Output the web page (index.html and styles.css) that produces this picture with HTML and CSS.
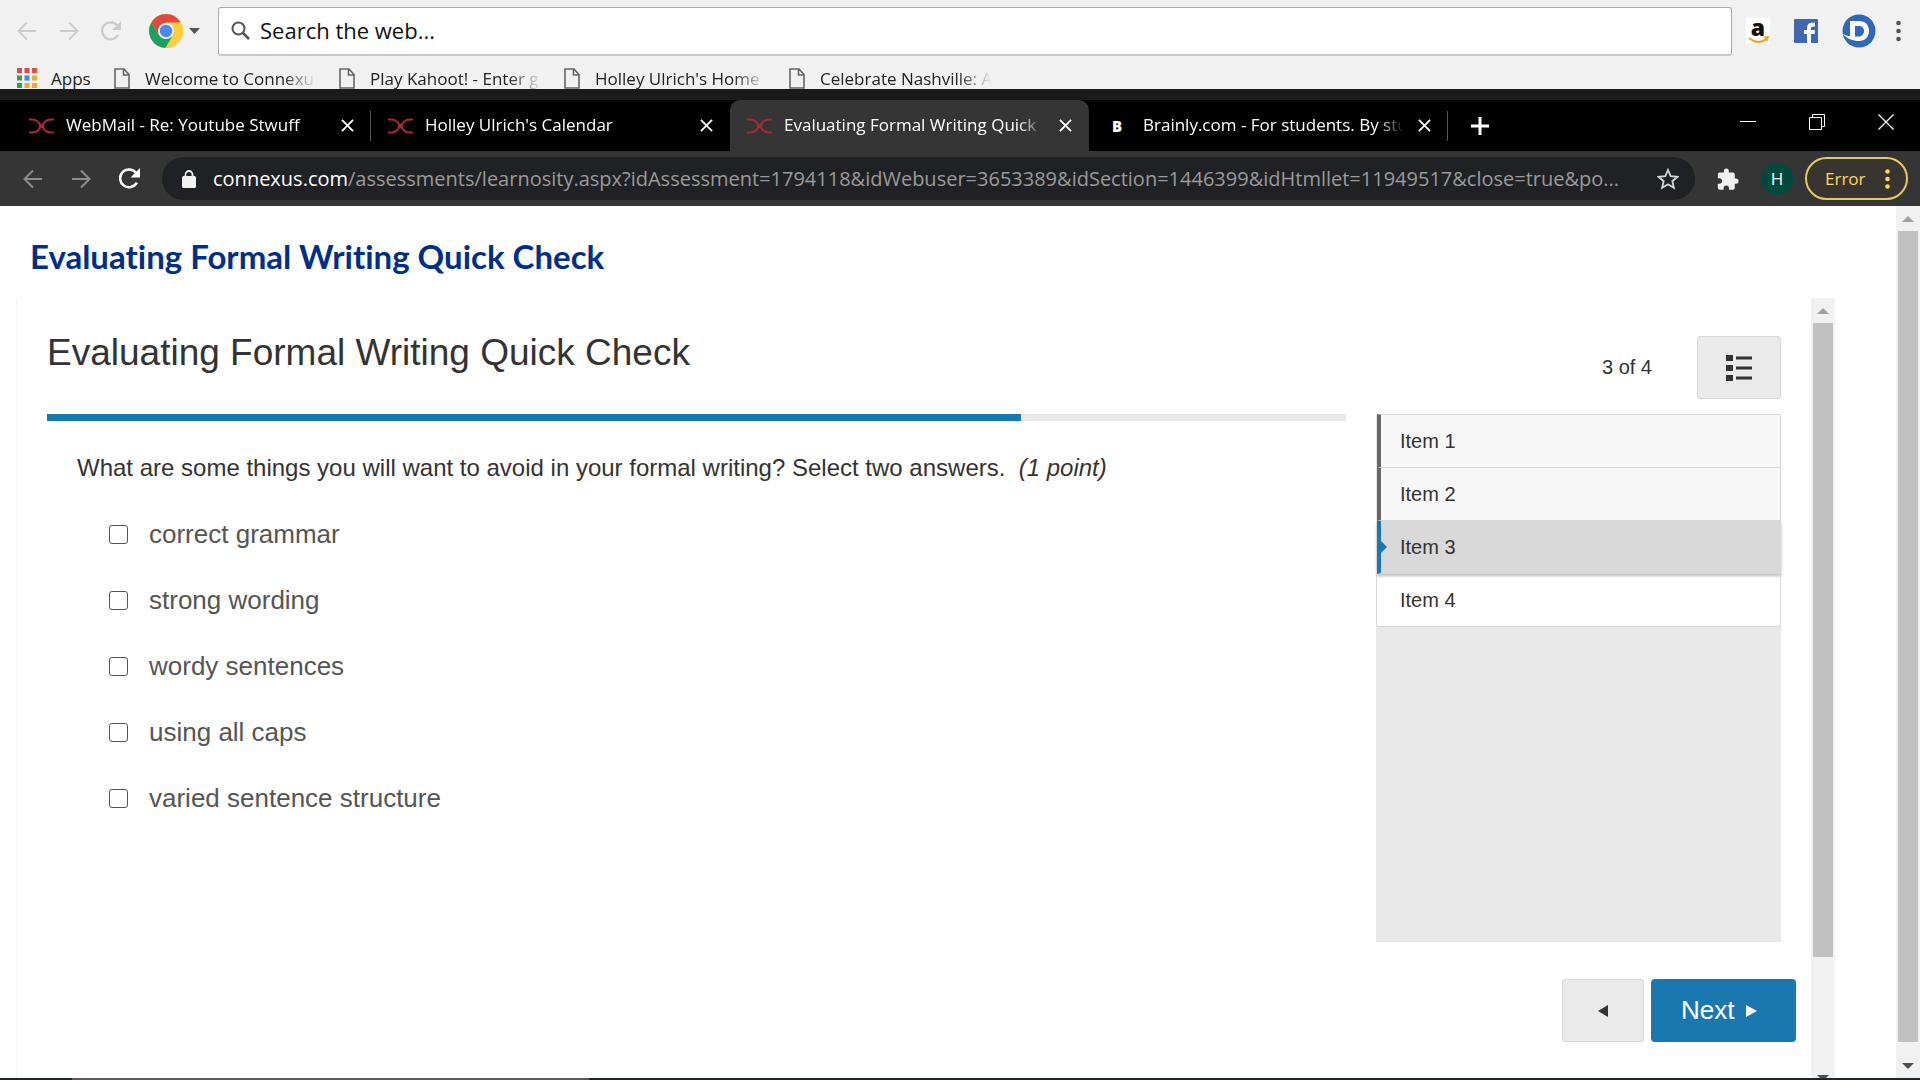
FILE: index.html
```html
<!DOCTYPE html>
<html lang="en">
  <head>
    <meta charset="utf-8">
    <title>Evaluating Formal Writing Quick Check</title>
    <link rel="stylesheet" href="styles.css">
  </head>
  <body>
    <!-- shared icons -->
    <svg class="sprite" width="0" height="0">
      <symbol id="back" viewBox="0 0 20 20"><path d="M19 10H2M10 1.500L1.500 10l8.500 8.500" fill="none" stroke="currentColor" stroke-width="2"/></symbol>
      <symbol id="forward" viewBox="0 0 20 20"><path d="M1 10h17M10 1.500l8.500 8.500-8.500 8.500" fill="none" stroke="currentColor" stroke-width="2"/></symbol>
      <symbol id="reload" viewBox="0 0 20 20"><path d="M17 14a8.500 8.500 0 1 1-.8-9.500" fill="none" stroke="currentColor" stroke-width="2.400"/><path d="M20 0v9h-9z" fill="currentColor"/></symbol>
      <symbol id="doc" viewBox="0 0 16 21"><path d="M1 1h9l5 5.500V20H1zM9.500 1v6H15" fill="none" stroke="#666" stroke-width="1.600"/></symbol>
      <symbol id="connexus" viewBox="0 0 25 16"><path d="M0 1.500h3c5 0 8 3 8 6.500s-3 6.500-8 6.500H0M25 1.500h-3c-5 0-8 3-8 6.500s3 6.500 8 6.500h3M10.500 5.500l4 5M14.500 5.500l-4 5" fill="none" stroke="#a52a35" stroke-width="2"/></symbol>
      <symbol id="close" viewBox="0 0 14 14"><path d="M1 1l12 12M13 1L1 13" stroke="#fff" stroke-width="2"/></symbol>
    </svg>

    <header class="launcher">
      <div class="launcher-bar">
        <button class="icon-btn faded" aria-label="Back"><svg width="20" height="20"><use href="#back"/></svg></button>
        <button class="icon-btn faded" aria-label="Forward"><svg width="20" height="20"><use href="#forward"/></svg></button>
        <button class="icon-btn faded" aria-label="Reload"><svg width="20" height="20"><use href="#reload"/></svg></button>
        <button class="icon-btn engine" aria-label="Search engine">
          <svg width="34" height="34" viewBox="0 0 34 34">
            <circle cx="17" cy="17" r="17" fill="#fccd3f"/>
            <path d="M2.300 8.500A17 17 0 0 1 31.700 8.500L17 9.200 9.800 21.100z" fill="#dc4b3e"/>
            <path d="M2.300 8.500L9.800 21.100 17 25l7 -3.500L16.500 34A17 17 0 0 1 2.300 8.500z" fill="#1aa15f"/>
            <path d="M31.700 8.500H17l7.200 12.800L16.500 34A17 17 0 0 0 31.700 8.500z" fill="#fccd3f"/>
            <circle cx="17" cy="17" r="8" fill="#f1f1f1"/>
            <circle cx="17" cy="17" r="6.200" fill="#4a89f3"/>
          </svg>
          <svg width="11" height="6"><path d="M0 0h11L5.500 6z" fill="#555"/></svg>
        </button>
        <label class="search">
          <svg width="19" height="19" viewBox="0 0 19 19"><circle cx="7.500" cy="7.500" r="6" fill="none" stroke="#555" stroke-width="2"/><path d="M12 12l6 6" stroke="#555" stroke-width="2.600"/></svg>
          <input type="text" value="Search the web..." aria-label="Search the web">
        </label>
        <div class="shortcuts">
          <a href="#" aria-label="Amazon"><svg width="24" height="26" viewBox="0 0 24 26"><rect width="24" height="26" fill="#fff"/><text x="12" y="18" text-anchor="middle" font-family="Open Sans, sans-serif" font-weight="800" font-size="23" fill="#111">a</text><path d="M3 20c6 5 13 5 19 0M18 19.500l4-.5-1.500 4" fill="none" stroke="#f3a02b" stroke-width="1.800"/></svg></a>
          <a href="#" aria-label="Facebook"><svg width="24" height="24" viewBox="0 0 24 24"><rect width="24" height="24" rx="1" fill="#4267b2"/><path d="M13 24v-9h-3v-4h3V9c0-3.500 2-5.200 5-5.200h3v3.600h-2c-1.600 0-2 .8-2 2V11h4l-.5 4H17v9z" fill="#fff"/></svg></a>
          <a href="#" aria-label="Dictionary"><svg width="34" height="34" viewBox="0 0 34 34"><circle cx="17" cy="17" r="16.500" fill="#2f68b8"/><path d="M8 7h9c6.500 0 10 4 10 10s-4 10-10 10c-6 0-12-2-16.500-7.500 3 2 5 2.500 7.500 2.500z" fill="#fff"/><path d="M13 12h4c3 0 5 2 5 5s-2 5.500-5 5.500h-4z" fill="#2f68b8"/></svg></a>
          <button class="icon-btn dots" aria-label="Menu"><svg width="5" height="22"><circle cx="2.500" cy="3" r="2.300"/><circle cx="2.500" cy="11" r="2.300"/><circle cx="2.500" cy="19" r="2.300"/></svg></button>
        </div>
      </div>
      <nav class="bookmarks">
        <a class="apps" href="#">
          <svg width="20" height="20" viewBox="0 0 20 20"><path d="M0 0h5v5H0zM7.500 0h5v5h-5zM15 0h5v5h-5z" fill="#de4c43"/><path d="M0 7.500h5v5H0zM0 15h5v5H0z" fill="#2ba15d"/><path d="M7.500 7.500h5v5h-5z" fill="#3f87ee"/><path d="M15 7.500h5v5h-5zM7.500 15h5v5h-5zM15 15h5v5h-5z" fill="#eeaa33"/></svg>
          Apps</a>
        <a class="bookmark" href="#"><svg width="16" height="21"><use href="#doc"/></svg><span>Welcome to Connexu</span></a>
        <a class="bookmark" href="#"><svg width="16" height="21"><use href="#doc"/></svg><span>Play Kahoot! - Enter g</span></a>
        <a class="bookmark" href="#"><svg width="16" height="21"><use href="#doc"/></svg><span>Holley Ulrich's Home</span></a>
        <a class="bookmark" href="#"><svg width="16" height="21"><use href="#doc"/></svg><span>Celebrate Nashville: A</span></a>
      </nav>
    </header>

    <div class="tab-strip">
      <div class="tab divided">
        <svg width="25" height="16"><use href="#connexus"/></svg>
        <span class="tab-title">WebMail - Re: Youtube Stwuff</span>
        <button class="icon-btn" aria-label="Close tab"><svg width="13" height="13"><use href="#close"/></svg></button>
      </div>
      <div class="tab">
        <svg width="25" height="16"><use href="#connexus"/></svg>
        <span class="tab-title">Holley Ulrich's Calendar</span>
        <button class="icon-btn" aria-label="Close tab"><svg width="13" height="13"><use href="#close"/></svg></button>
      </div>
      <div class="tab active">
        <svg width="25" height="16"><use href="#connexus"/></svg>
        <span class="tab-title">Evaluating Formal Writing Quick</span>
        <button class="icon-btn" aria-label="Close tab"><svg width="13" height="13"><use href="#close"/></svg></button>
      </div>
      <div class="tab divided">
        <span class="brainly">B</span>
        <span class="tab-title">Brainly.com - For students. By stu</span>
        <button class="icon-btn" aria-label="Close tab"><svg width="13" height="13"><use href="#close"/></svg></button>
      </div>
      <button class="icon-btn new-tab" aria-label="New tab"><svg width="18" height="18"><path d="M9 0v18M0 9h18" stroke="#fff" stroke-width="3"/></svg></button>
      <div class="window-controls">
        <button class="icon-btn" aria-label="Minimize"><svg width="16" height="16"><path d="M0 7.500h16" stroke="#fff"/></svg></button>
        <button class="icon-btn" aria-label="Restore"><svg width="16" height="16"><path d="M.5 3.500h12v12H.5zM3.500 3V.5h12v12H13" fill="none" stroke="#fff"/></svg></button>
        <button class="icon-btn" aria-label="Close window"><svg width="16" height="16"><path d="M.5.5l15 15M15.500.5l-15 15" stroke="#fff" stroke-width="1.300"/></svg></button>
      </div>
    </div>

    <div class="toolbar">
      <button class="icon-btn dim" aria-label="Back"><svg width="20" height="20"><use href="#back"/></svg></button>
      <button class="icon-btn dim" aria-label="Forward"><svg width="20" height="20"><use href="#forward"/></svg></button>
      <button class="icon-btn" aria-label="Reload"><svg width="21" height="21"><use href="#reload"/></svg></button>
      <div class="address">
        <svg width="14" height="18" viewBox="0 0 14 18"><rect y="6" width="14" height="12" rx="1.500" fill="#f1f1f1"/><path d="M3.500 7V4.500a3.500 3.500 0 0 1 7 0V7" fill="none" stroke="#f1f1f1" stroke-width="1.800"/></svg>
        <div class="url" role="textbox" contenteditable="true" aria-label="Address"><b>connexus.com</b>/assessments/learnosity.aspx?idAssessment=1794118&amp;idWebuser=3653389&amp;idSection=1446399&amp;idHtmllet=11949517&amp;close=true&amp;po...</div>
        <button class="icon-btn" aria-label="Bookmark this page"><svg width="22" height="22" viewBox="0 0 22 22"><path d="M11 2l2.700 6.200 6.800.6-5.200 4.400 1.600 6.600L11 16.300l-5.900 3.500 1.600-6.600L1.500 8.800l6.800-.6z" fill="none" stroke="#d5d5d5" stroke-width="1.800"/></svg></button>
      </div>
      <button class="icon-btn" aria-label="Extensions"><svg width="22" height="22" viewBox="0 0 22 22"><path d="M19 10.500h-1.200V6.500a2 2 0 0 0-2-2h-4V3a2.500 2.500 0 0 0-5 0v1.500h-4a2 2 0 0 0-2 2v3.800h1.500a2.700 2.700 0 0 1 0 5.400H.8v4a2 2 0 0 0 2 2h3.800v-1.500a2.700 2.700 0 0 1 5.400 0v1.500h3.800a2 2 0 0 0 2-2v-4H19a2.600 2.600 0 0 0 0-5.200z" fill="#f1f1f1"/></svg></button>
      <button class="avatar" aria-label="Profile">H</button>
      <button class="error">Error <svg width="5" height="20"><circle cx="2.500" cy="2.500" r="2.300"/><circle cx="2.500" cy="10" r="2.300"/><circle cx="2.500" cy="17.500" r="2.300"/></svg></button>
    </div>

    <div class="viewport">
      <main class="page">
        <h1>Evaluating Formal Writing Quick Check</h1>
        <div class="frame">
          <div class="player">
            <div class="columns">
              <section class="question">
                <h2>Evaluating Formal Writing Quick Check</h2>
                <div class="progress"><div class="progress-done" style="width: 75%"></div></div>
                <p class="prompt">What are some things you will want to avoid in your formal writing? Select two answers.&nbsp; <em>(1 point)</em></p>
                <ul class="answers">
                  <li><label><input type="checkbox">correct grammar</label></li>
                  <li><label><input type="checkbox">strong wording</label></li>
                  <li><label><input type="checkbox">wordy sentences</label></li>
                  <li><label><input type="checkbox">using all caps</label></li>
                  <li><label><input type="checkbox">varied sentence structure</label></li>
                </ul>
              </section>
              <aside class="side">
                <div class="side-head">
                  <span>3 of 4</span>
                  <button class="grey-btn list-btn" aria-label="Item list"><svg width="26" height="26"><path d="M0 0h7v6H0zM0 10h7v6H0zM0 20h7v6H0zM10 1.500h16v3H10zM10 11.500h16v3H10zM10 21.500h16v3H10z" fill="#333"/></svg></button>
                </div>
                <nav class="items">
                  <a class="item seen" href="#">Item 1</a>
                  <a class="item seen" href="#">Item 2</a>
                  <a class="item current" href="#">Item 3</a>
                  <a class="item" href="#">Item 4</a>
                </nav>
              </aside>
            </div>
            <div class="pager">
              <button class="grey-btn prev" aria-label="Previous"><svg width="10" height="12"><path d="M10 0v12L0 6z" fill="#333"/></svg></button>
              <button class="next">Next <svg width="11" height="12"><path d="M0 0v12l11-6z" fill="#fff"/></svg></button>
            </div>
          </div>
          <div class="scrollbar inner">
            <div class="arrow up"></div>
            <div class="thumb"></div>
            <div class="rest"></div>
            <div class="arrow down"></div>
          </div>
        </div>
      </main>
      <div class="scrollbar outer">
        <div class="arrow up"></div>
        <div class="thumb"></div>
        <div class="arrow down"></div>
      </div>
    </div>
    <div class="taskbar"><div class="taskbar-search"></div></div>
  </body>
</html>
```
FILE: styles.css
```css
* {
  box-sizing: border-box;
}
body {
  margin: 0;
  height: 100vh;
  display: flex;
  flex-direction: column;
  overflow: hidden;
  background: #fff;
  font-family: "Open Sans", "Noto Sans", sans-serif;
}
button, input {
  font-family: inherit;
}
a {
  color: inherit;
  text-decoration: none;
}
svg {
  display: block;
  flex: none;
}
.sprite {
  position: absolute;
}
.icon-btn {
  display: flex;
  align-items: center;
  flex: none;
  padding: 0;
  border: 0;
  background: none;
  color: #fff;
  cursor: pointer;
}

/* launcher */
.launcher {
  flex: none;
  height: 89px;
  overflow: hidden;
  background: #f1f1f1;
}
.launcher-bar {
  display: flex;
  align-items: center;
  gap: 22px;
  height: 62px;
  padding: 0 19px 0 17px;
}
.faded {
  color: #ccc;
}
.engine {
  gap: 6px;
  margin-left: 6px;
}
.search {
  flex: 1;
  display: flex;
  align-items: center;
  gap: 10px;
  height: 49px;
  padding: 0 12px;
  margin-left: -4px;
  background: #fff;
  border: 1px solid #aaa;
  border-bottom: 2px solid #c8c8c8;
  border-radius: 3px;
}
.search input {
  flex: 1;
  border: 0;
  padding: 0 0 2px;
  outline: none;
  background: none;
  color: #111;
  font-size: 22px;
}
.shortcuts {
  display: flex;
  align-items: center;
  gap: 24px;
  margin-left: -8px;
}
.dots {
  margin-left: -4px;
  fill: #555;
}
.bookmarks {
  display: flex;
  align-items: center;
  height: 32px;
  padding-left: 17px;
  font-size: 17px;
  color: #222;
}
.apps {
  display: flex;
  align-items: center;
  gap: 14px;
  width: 97px;
}
.bookmark {
  display: flex;
  align-items: center;
  gap: 15px;
  width: 225px;
}
.bookmark span {
  width: 172px;
  white-space: nowrap;
  -webkit-mask-image: linear-gradient(to right, #000 80%, transparent);
  mask-image: linear-gradient(to right, #000 80%, transparent);
}

/* browser tabs */
.tab-strip {
  flex: none;
  display: flex;
  height: 62px;
  padding: 0 0 0 12px;
  background: #000;
  border-top: 11px solid #1a1a1a;
}
.tab {
  display: flex;
  align-items: center;
  width: 359px;
  height: 51px;
  padding: 0 17px;
  color: #fff;
  font-size: 17px;
}
.tab.active {
  background: #353535;
  border-radius: 10px 10px 0 0;
}
.divided {
  background: linear-gradient(#555, #555) right center / 1px 30px no-repeat;
}
.tab-title {
  flex: 1;
  min-width: 0;
  margin: 0 14px 0 12px;
  padding-bottom: 2px;
  white-space: nowrap;
  -webkit-mask-image: linear-gradient(to right, #000 90%, transparent);
  mask-image: linear-gradient(to right, #000 90%, transparent);
}
.brainly {
  width: 25px;
  padding-left: 6px;
  font-size: 15px;
  font-weight: 800;
}
.new-tab {
  margin-left: 23px;
}
.window-controls {
  display: flex;
  gap: 53px;
  height: 44px;
  margin-left: auto;
  margin-right: 26px;
}

/* address bar */
.toolbar {
  flex: none;
  display: flex;
  align-items: center;
  gap: 28px;
  height: 55px;
  padding: 0 12px 0 23px;
  background: #353535;
}
.dim {
  color: #8d8d8d;
}
.address {
  flex: 1;
  display: flex;
  align-items: center;
  gap: 17px;
  min-width: 0;
  height: 43px;
  padding: 0 16px 0 20px;
  margin-left: -6px;
  margin-right: -6px;
  border-radius: 22px;
  background: #202124;
}
.url {
  flex: 1;
  overflow: hidden;
  white-space: nowrap;
  color: #9a9a9a;
  font-size: 20px;
  outline: none;
}
.url b {
  color: #fff;
  font-weight: 400;
}
.avatar {
  width: 32px;
  height: 32px;
  margin-left: -6px;
  padding: 0;
  border: 0;
  border-radius: 50%;
  background: #00493e;
  color: #fff;
  font-size: 17px;
}
.error {
  display: flex;
  align-items: center;
  justify-content: space-between;
  width: 103px;
  height: 43px;
  margin-left: -16px;
  padding: 0 16px 0 18px;
  border: 2px solid #e5c964;
  border-radius: 22px;
  background: #383530;
  color: #fdd663;
  fill: #fdd663;
  font-size: 17px;
}

/* page */
.viewport {
  flex: 1;
  display: flex;
  min-height: 0;
}
.page {
  flex: 1;
  display: flex;
  flex-direction: column;
  min-width: 0;
  padding: 0 61px 0 16px;
}
h1 {
  margin: 0;
  height: 92px;
  padding: 29px 14px 0;
  color: #002f87;
  font: bold 33px/42px Lato, sans-serif;
  font-variant-ligatures: none;
}
.frame {
  flex: 1;
  display: flex;
  min-height: 0;
}
.player {
  flex: 1;
  display: flex;
  flex-direction: column;
  padding: 38px 15px 36px 30px;
  border-left: 1px solid #f6f6f6;
  color: #333;
  font-family: "Liberation Sans", Arial, sans-serif;
}
.columns {
  flex: 1;
  display: flex;
  gap: 30px;
  padding-right: 15px;
}
.question {
  flex: 1;
}
h2 {
  height: 78px;
  margin: 0;
  font-size: 37px;
  font-weight: 400;
  line-height: 34px;
}
.progress {
  height: 7px;
  background: #e8e8e8;
}
.progress-done {
  height: 7px;
  background: #1b77b0;
}
.prompt {
  margin: 32px 30px 0;
  font-size: 24px;
  line-height: 30px;
}
.answers {
  margin: 33px 0 0;
  padding: 0 0 0 62px;
  list-style: none;
  color: #555;
  font-size: 26px;
}
.answers li {
  height: 66px;
  line-height: 36px;
}
.answers label {
  display: inline-flex;
  align-items: center;
}
.answers input {
  appearance: none;
  width: 19px;
  height: 19px;
  margin: 0 21px 0 0;
  border: 1px solid #555;
  border-radius: 3px;
  background: #fff;
}
.side {
  display: flex;
  flex-direction: column;
  width: 405px;
}
.side-head {
  display: flex;
  align-items: center;
  justify-content: flex-end;
  gap: 45px;
  height: 63px;
  margin-bottom: 15px;
  font-size: 20px;
}
.grey-btn {
  display: flex;
  align-items: center;
  justify-content: center;
  height: 63px;
  border: 1px solid #d9d9d9;
  border-radius: 3px;
  background: #eaeaea;
}
.list-btn {
  width: 84px;
}
.items {
  flex: 1;
  background: #e8e8e8;
}
.item {
  display: block;
  height: 53px;
  padding-left: 23px;
  border: 1px solid #d9d9d9;
  border-top: 0;
  background: #fff;
  font-size: 20px;
  line-height: 53px;
}
.item:first-child {
  height: 54px;
  border-top: 1px solid #d9d9d9;
}
.item:last-child {
  border-radius: 0 0 3px 3px;
}
.seen, .current {
  padding-left: 19px;
  border-left: 4px solid #666;
  margin-left: 1px;
  background: #f7f7f7;
}
.current {
  position: relative;
  border-left-color: #1b77b0;
  background: #d9d9d9;
  box-shadow: 0 2px 3px #bbb;
}
.current::before {
  content: "";
  position: absolute;
  left: 0;
  top: 20px;
  border: 6px solid transparent;
  border-left-color: #1b77b0;
  border-right: 0;
}
.pager {
  display: flex;
  justify-content: flex-end;
  gap: 7px;
  margin-top: 37px;
}
.prev {
  width: 82px;
}
.next {
  display: flex;
  align-items: center;
  gap: 12px;
  width: 145px;
  height: 63px;
  padding: 0 0 0 30px;
  border: 0;
  border-radius: 4px;
  background: #1b77b0;
  color: #fff;
  font-size: 26px;
}

/* scrollbars */
.scrollbar {
  display: flex;
  flex-direction: column;
  flex: none;
  width: 24px;
  background: #f1f1f1;
  overflow: hidden;
}
.arrow {
  display: flex;
  align-items: center;
  justify-content: center;
  flex: none;
  height: 25px;
}
.arrow::before {
  content: "";
  border: 6px solid transparent;
}
.up::before {
  border-bottom-color: #a0a0a0;
  border-top: 0;
}
.down::before {
  border-top-color: #505050;
  border-bottom: 0;
}
.thumb {
  flex: 1;
  margin: 0 2px;
  background: #c1c1c1;
}
.outer .down {
  height: 36px;
  padding-top: 12px;
}
.inner .thumb {
  flex: 634;
}
.inner .rest {
  flex: 118;
}
.inner .down {
  height: 3px;
  align-items: flex-start;
}

.taskbar {
  flex: none;
  height: 2px;
  padding-left: 72px;
  background: #1f252b;
}
.taskbar-search {
  width: 28%;
  height: 2px;
  background: #5a5a5a;
}
```
